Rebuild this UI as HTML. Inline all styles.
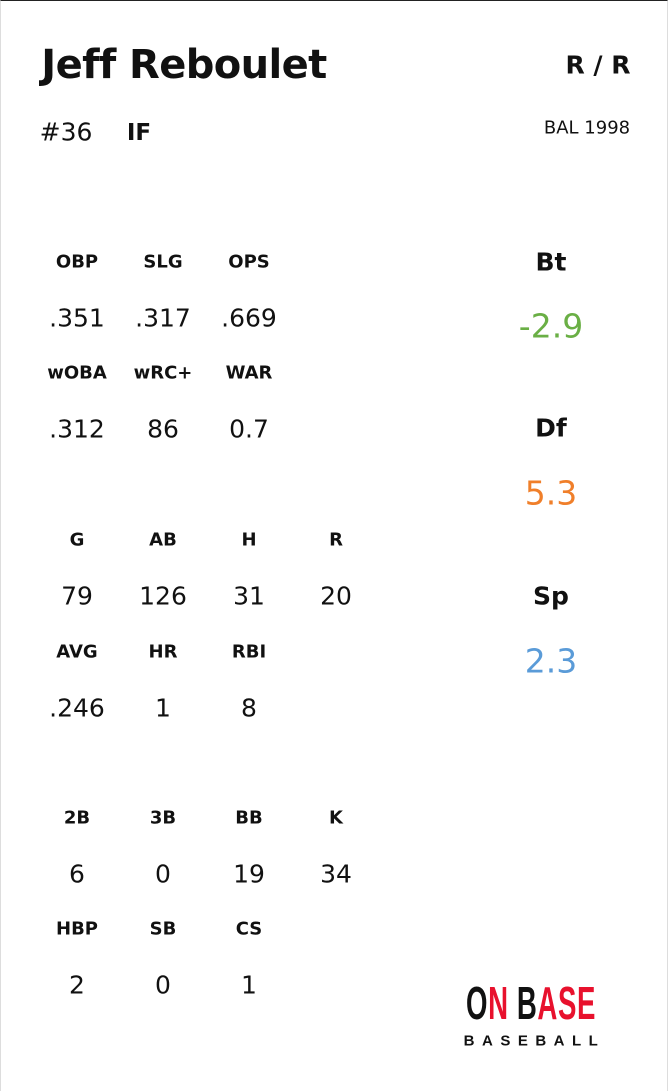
<!DOCTYPE html>
<html><head><style>
body{margin:0;width:668px;height:1091px;background:#fff;font-family:"DejaVu Sans","Liberation Sans",sans-serif;position:relative;overflow:hidden}
.b{position:absolute;left:0;top:0;width:666px;height:1090px;border-top:1px solid #222;border-left:1px solid #ddd;border-right:1px solid #ddd}
.t{position:absolute;transform:translate(-50%,-50%);white-space:nowrap;color:#111}
.h{font-weight:bold;font-size:18px}
.v{font-size:25px}
.r{font-weight:bold;font-size:25px}
.n{font-size:33px}
</style></head><body><div class="b"></div>
<div class="t" style="left:184px;top:65px;font-weight:bold;font-size:40px;letter-spacing:-0.6px">Jeff Reboulet</div>
<div class="t" style="left:598px;top:65px;font-weight:bold;font-size:25px">R / R</div>
<div class="t" style="left:66px;top:132px;font-size:25px">#36</div>
<div class="t" style="left:139px;top:133px;font-weight:bold;font-size:23px">IF</div>
<div class="t" style="left:587px;top:128px;font-size:18px">BAL 1998</div>

<div class="t h" style="left:77px;top:262px">OBP</div><div class="t h" style="left:163px;top:262px">SLG</div><div class="t h" style="left:249px;top:262px">OPS</div>
<div class="t v" style="left:77px;top:318px">.351</div><div class="t v" style="left:163px;top:318px">.317</div><div class="t v" style="left:249px;top:318px">.669</div>
<div class="t h" style="left:77px;top:373px">wOBA</div><div class="t h" style="left:163px;top:373px">wRC+</div><div class="t h" style="left:249px;top:373px">WAR</div>
<div class="t v" style="left:77px;top:429px">.312</div><div class="t v" style="left:163px;top:429px">86</div><div class="t v" style="left:249px;top:429px">0.7</div>

<div class="t h" style="left:77px;top:540px">G</div><div class="t h" style="left:163px;top:540px">AB</div><div class="t h" style="left:249px;top:540px">H</div><div class="t h" style="left:336px;top:540px">R</div>
<div class="t v" style="left:77px;top:596px">79</div><div class="t v" style="left:163px;top:596px">126</div><div class="t v" style="left:249px;top:596px">31</div><div class="t v" style="left:336px;top:596px">20</div>
<div class="t h" style="left:77px;top:652px">AVG</div><div class="t h" style="left:163px;top:652px">HR</div><div class="t h" style="left:249px;top:652px">RBI</div>
<div class="t v" style="left:77px;top:708px">.246</div><div class="t v" style="left:163px;top:708px">1</div><div class="t v" style="left:249px;top:708px">8</div>

<div class="t h" style="left:77px;top:818px">2B</div><div class="t h" style="left:163px;top:818px">3B</div><div class="t h" style="left:249px;top:818px">BB</div><div class="t h" style="left:336px;top:818px">K</div>
<div class="t v" style="left:77px;top:874px">6</div><div class="t v" style="left:163px;top:874px">0</div><div class="t v" style="left:249px;top:874px">19</div><div class="t v" style="left:336px;top:874px">34</div>
<div class="t h" style="left:77px;top:929px">HBP</div><div class="t h" style="left:163px;top:929px">SB</div><div class="t h" style="left:249px;top:929px">CS</div>
<div class="t v" style="left:77px;top:985px">2</div><div class="t v" style="left:163px;top:985px">0</div><div class="t v" style="left:249px;top:985px">1</div>

<div class="t r" style="left:551px;top:262px">Bt</div>
<div class="t n" style="left:551px;top:326px;color:#6aaf45">-2.9</div>
<div class="t r" style="left:551px;top:428px">Df</div>
<div class="t n" style="left:551px;top:493px;color:#f07f2a">5.3</div>
<div class="t r" style="left:551px;top:596px">Sp</div>
<div class="t n" style="left:551px;top:661px;color:#5a9bd8">2.3</div>

<div class="t" style="left:531px;top:1003px;font-family:'Liberation Sans Narrow','Liberation Sans',sans-serif;font-weight:bold;font-size:46px;transform:translate(-50%,-50%) scaleX(0.6);letter-spacing:1px;line-height:1">O<span style="color:#e8112d">N</span> B<span style="color:#e8112d">AS</span><span style="color:#e8112d">E</span></div>
<div class="t" style="left:531px;top:1041px;font-family:'Liberation Sans Narrow','Liberation Sans',sans-serif;font-weight:bold;font-size:15px;letter-spacing:7.5px;padding-left:7px">BASEBALL</div>
</body></html>
